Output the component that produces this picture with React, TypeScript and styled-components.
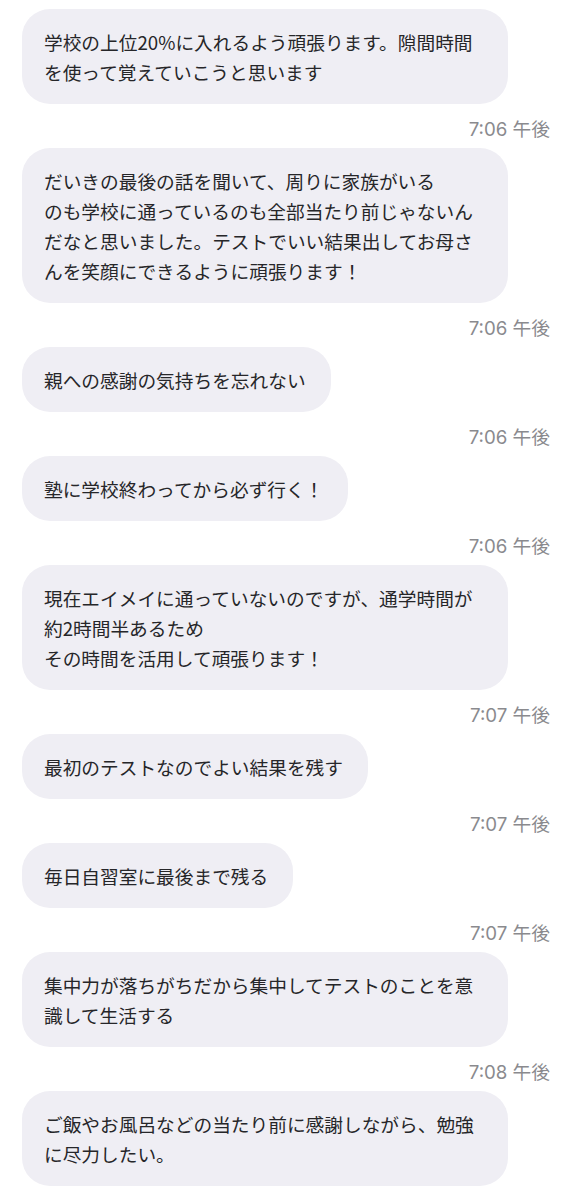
import React from 'react';
import styled, { createGlobalStyle } from 'styled-components';

const GlobalStyle = createGlobalStyle`
  body {
    margin: 0;
    background-color: #fff;
    font-family: "Noto Sans CJK JP", "Noto Sans", sans-serif;
  }
`;

const Thread = styled.div`
  display: flex;
  flex-direction: column;
  align-items: flex-start;
  padding: 9px 23px 0 22px;
`;

const Bubble = styled.div`
  box-sizing: border-box;
  width: fit-content;
  max-width: 486px;
  padding: 17.5px 25px 17.5px 22px;
  border-radius: 28px;
  background-color: #efeef4;
  color: #262629;
  font-size: 18.7px;
  line-height: 30px;
  white-space: pre-wrap;
  line-break: strict;
`;

const Time = styled.div`
  align-self: stretch;
  text-align: right;
  padding: 15px 0 7px;
  color: #8a8a8e;
  font-family: Inter, "Noto Sans CJK JP", sans-serif;
  font-size: 18.7px;
  line-height: 22px;
`;

interface Message {
    text: string;
    time?: string;
}

const messages: Message[] = [
    { text: '学校の上位20%に入れるよう頑張ります。隙間時間を使って覚えていこうと思います', time: '7:06 午後' },
    { text: 'だいきの最後の話を聞いて、周りに家族がいる\nのも学校に通っているのも全部当たり前じゃないんだなと思いました。テストでいい結果出してお母さんを笑顔にできるように頑張ります！', time: '7:06 午後' },
    { text: '親への感謝の気持ちを忘れない', time: '7:06 午後' },
    { text: '塾に学校終わってから必ず行く！', time: '7:06 午後' },
    { text: '現在エイメイに通っていないのですが、通学時間が約2時間半あるため\nその時間を活用して頑張ります！', time: '7:07 午後' },
    { text: '最初のテストなのでよい結果を残す', time: '7:07 午後' },
    { text: '毎日自習室に最後まで残る', time: '7:07 午後' },
    { text: '集中力が落ちがちだから集中してテストのことを意識して生活する', time: '7:08 午後' },
    { text: 'ご飯やお風呂などの当たり前に感謝しながら、勉強に尽力したい。' },
];

export default function App() {
    return (
        <>
            <GlobalStyle />
            <Thread>
                {messages.map((m, index) => (
                    <React.Fragment key={index}>
                        <Bubble>{m.text}</Bubble>
                        {m.time && <Time>{m.time}</Time>}
                    </React.Fragment>
                ))}
            </Thread>
        </>
    );
}
